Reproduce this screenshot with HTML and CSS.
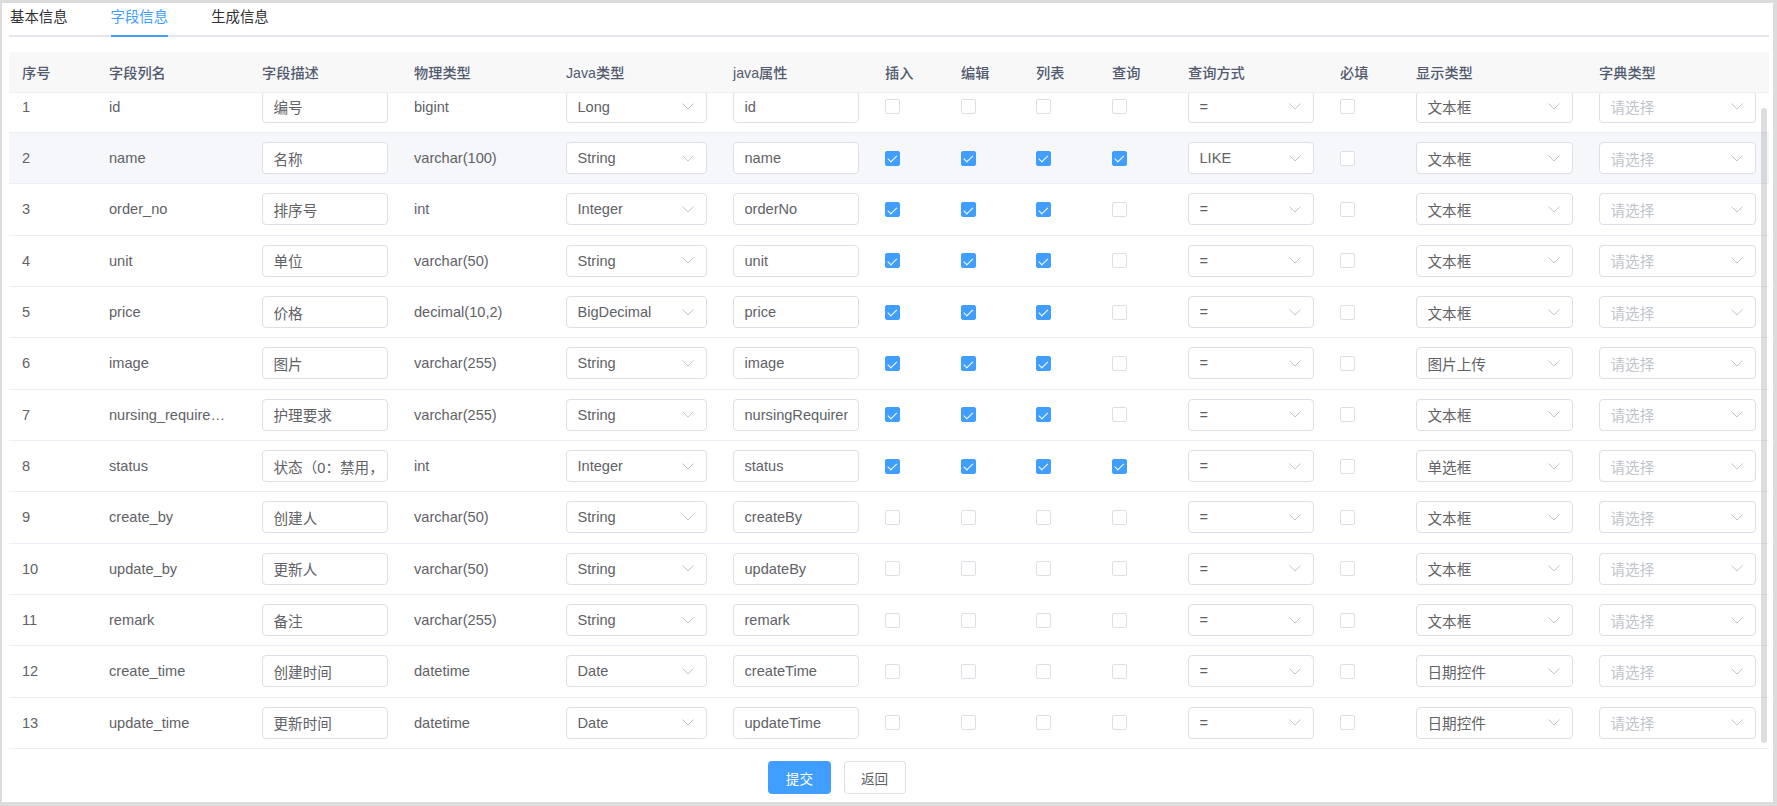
FILE: index.html
```html
<!DOCTYPE html>
<html lang="zh-CN">
<head>
<meta charset="utf-8">
<title>字段信息</title>
<link rel="stylesheet" href="styles.css">
</head>
<body>
<div class="card">
  <div class="tabs">
    <div class="tab"><span>基本信息</span></div>
    <div class="tab active"><span>字段信息</span></div>
    <div class="tab"><span>生成信息</span></div>
  </div>

  <table class="grid head">
    <colgroup>
      <col class="c1"><col class="c2"><col class="c3"><col class="c4"><col class="c5"><col class="c6"><col class="c7"><col class="c8"><col class="c9"><col class="c10"><col class="c11"><col class="c12"><col class="c13"><col class="c14">
    </colgroup>
    <thead>
      <tr>
        <th>序号</th><th>字段列名</th><th>字段描述</th><th>物理类型</th><th>Java类型</th><th>java属性</th><th>插入</th><th>编辑</th><th>列表</th><th>查询</th><th>查询方式</th><th>必填</th><th>显示类型</th><th>字典类型</th>
      </tr>
    </thead>
  </table>

  <div class="body-wrap">
    <table class="grid body">
      <colgroup>
        <col class="c1"><col class="c2"><col class="c3"><col class="c4"><col class="c5"><col class="c6"><col class="c7"><col class="c8"><col class="c9"><col class="c10"><col class="c11"><col class="c12"><col class="c13"><col class="c14">
      </colgroup>
      <tbody>
        <tr>
          <td>1</td><td>id</td><td><input class="inp" value="编号"></td><td>bigint</td>
          <td><div class="sel"><span>Long</span><svg viewBox="0 0 12 7"><path d="M0.5 0.5L6 6L11.5 0.5"/></svg></div></td>
          <td><input class="inp" value="id"></td>
          <td><span class="cb"></span></td><td><span class="cb"></span></td><td><span class="cb"></span></td><td><span class="cb"></span></td>
          <td><div class="sel"><span>=</span><svg viewBox="0 0 12 7"><path d="M0.5 0.5L6 6L11.5 0.5"/></svg></div></td>
          <td><span class="cb"></span></td>
          <td><div class="sel"><span>文本框</span><svg viewBox="0 0 12 7"><path d="M0.5 0.5L6 6L11.5 0.5"/></svg></div></td>
          <td><div class="sel"><span class="ph">请选择</span><svg viewBox="0 0 12 7"><path d="M0.5 0.5L6 6L11.5 0.5"/></svg></div></td>
        </tr>
        <tr class="hover">
          <td>2</td><td>name</td><td><input class="inp" value="名称"></td><td>varchar(100)</td>
          <td><div class="sel"><span>String</span><svg viewBox="0 0 12 7"><path d="M0.5 0.5L6 6L11.5 0.5"/></svg></div></td>
          <td><input class="inp" value="name"></td>
          <td><span class="cb on"></span></td><td><span class="cb on"></span></td><td><span class="cb on"></span></td><td><span class="cb on"></span></td>
          <td><div class="sel"><span>LIKE</span><svg viewBox="0 0 12 7"><path d="M0.5 0.5L6 6L11.5 0.5"/></svg></div></td>
          <td><span class="cb"></span></td>
          <td><div class="sel"><span>文本框</span><svg viewBox="0 0 12 7"><path d="M0.5 0.5L6 6L11.5 0.5"/></svg></div></td>
          <td><div class="sel"><span class="ph">请选择</span><svg viewBox="0 0 12 7"><path d="M0.5 0.5L6 6L11.5 0.5"/></svg></div></td>
        </tr>
        <tr>
          <td>3</td><td>order_no</td><td><input class="inp" value="排序号"></td><td>int</td>
          <td><div class="sel"><span>Integer</span><svg viewBox="0 0 12 7"><path d="M0.5 0.5L6 6L11.5 0.5"/></svg></div></td>
          <td><input class="inp" value="orderNo"></td>
          <td><span class="cb on"></span></td><td><span class="cb on"></span></td><td><span class="cb on"></span></td><td><span class="cb"></span></td>
          <td><div class="sel"><span>=</span><svg viewBox="0 0 12 7"><path d="M0.5 0.5L6 6L11.5 0.5"/></svg></div></td>
          <td><span class="cb"></span></td>
          <td><div class="sel"><span>文本框</span><svg viewBox="0 0 12 7"><path d="M0.5 0.5L6 6L11.5 0.5"/></svg></div></td>
          <td><div class="sel"><span class="ph">请选择</span><svg viewBox="0 0 12 7"><path d="M0.5 0.5L6 6L11.5 0.5"/></svg></div></td>
        </tr>
        <tr>
          <td>4</td><td>unit</td><td><input class="inp" value="单位"></td><td>varchar(50)</td>
          <td><div class="sel"><span>String</span><svg viewBox="0 0 12 7"><path d="M0.5 0.5L6 6L11.5 0.5"/></svg></div></td>
          <td><input class="inp" value="unit"></td>
          <td><span class="cb on"></span></td><td><span class="cb on"></span></td><td><span class="cb on"></span></td><td><span class="cb"></span></td>
          <td><div class="sel"><span>=</span><svg viewBox="0 0 12 7"><path d="M0.5 0.5L6 6L11.5 0.5"/></svg></div></td>
          <td><span class="cb"></span></td>
          <td><div class="sel"><span>文本框</span><svg viewBox="0 0 12 7"><path d="M0.5 0.5L6 6L11.5 0.5"/></svg></div></td>
          <td><div class="sel"><span class="ph">请选择</span><svg viewBox="0 0 12 7"><path d="M0.5 0.5L6 6L11.5 0.5"/></svg></div></td>
        </tr>
        <tr>
          <td>5</td><td>price</td><td><input class="inp" value="价格"></td><td>decimal(10,2)</td>
          <td><div class="sel"><span>BigDecimal</span><svg viewBox="0 0 12 7"><path d="M0.5 0.5L6 6L11.5 0.5"/></svg></div></td>
          <td><input class="inp" value="price"></td>
          <td><span class="cb on"></span></td><td><span class="cb on"></span></td><td><span class="cb on"></span></td><td><span class="cb"></span></td>
          <td><div class="sel"><span>=</span><svg viewBox="0 0 12 7"><path d="M0.5 0.5L6 6L11.5 0.5"/></svg></div></td>
          <td><span class="cb"></span></td>
          <td><div class="sel"><span>文本框</span><svg viewBox="0 0 12 7"><path d="M0.5 0.5L6 6L11.5 0.5"/></svg></div></td>
          <td><div class="sel"><span class="ph">请选择</span><svg viewBox="0 0 12 7"><path d="M0.5 0.5L6 6L11.5 0.5"/></svg></div></td>
        </tr>
        <tr>
          <td>6</td><td>image</td><td><input class="inp" value="图片"></td><td>varchar(255)</td>
          <td><div class="sel"><span>String</span><svg viewBox="0 0 12 7"><path d="M0.5 0.5L6 6L11.5 0.5"/></svg></div></td>
          <td><input class="inp" value="image"></td>
          <td><span class="cb on"></span></td><td><span class="cb on"></span></td><td><span class="cb on"></span></td><td><span class="cb"></span></td>
          <td><div class="sel"><span>=</span><svg viewBox="0 0 12 7"><path d="M0.5 0.5L6 6L11.5 0.5"/></svg></div></td>
          <td><span class="cb"></span></td>
          <td><div class="sel"><span>图片上传</span><svg viewBox="0 0 12 7"><path d="M0.5 0.5L6 6L11.5 0.5"/></svg></div></td>
          <td><div class="sel"><span class="ph">请选择</span><svg viewBox="0 0 12 7"><path d="M0.5 0.5L6 6L11.5 0.5"/></svg></div></td>
        </tr>
        <tr>
          <td>7</td><td>nursing_requirements</td><td><input class="inp" value="护理要求"></td><td>varchar(255)</td>
          <td><div class="sel"><span>String</span><svg viewBox="0 0 12 7"><path d="M0.5 0.5L6 6L11.5 0.5"/></svg></div></td>
          <td><input class="inp" value="nursingRequirements"></td>
          <td><span class="cb on"></span></td><td><span class="cb on"></span></td><td><span class="cb on"></span></td><td><span class="cb"></span></td>
          <td><div class="sel"><span>=</span><svg viewBox="0 0 12 7"><path d="M0.5 0.5L6 6L11.5 0.5"/></svg></div></td>
          <td><span class="cb"></span></td>
          <td><div class="sel"><span>文本框</span><svg viewBox="0 0 12 7"><path d="M0.5 0.5L6 6L11.5 0.5"/></svg></div></td>
          <td><div class="sel"><span class="ph">请选择</span><svg viewBox="0 0 12 7"><path d="M0.5 0.5L6 6L11.5 0.5"/></svg></div></td>
        </tr>
        <tr>
          <td>8</td><td>status</td><td><input class="inp" value="状态（0：禁用，1：启用）"></td><td>int</td>
          <td><div class="sel"><span>Integer</span><svg viewBox="0 0 12 7"><path d="M0.5 0.5L6 6L11.5 0.5"/></svg></div></td>
          <td><input class="inp" value="status"></td>
          <td><span class="cb on"></span></td><td><span class="cb on"></span></td><td><span class="cb on"></span></td><td><span class="cb on"></span></td>
          <td><div class="sel"><span>=</span><svg viewBox="0 0 12 7"><path d="M0.5 0.5L6 6L11.5 0.5"/></svg></div></td>
          <td><span class="cb"></span></td>
          <td><div class="sel"><span>单选框</span><svg viewBox="0 0 12 7"><path d="M0.5 0.5L6 6L11.5 0.5"/></svg></div></td>
          <td><div class="sel"><span class="ph">请选择</span><svg viewBox="0 0 12 7"><path d="M0.5 0.5L6 6L11.5 0.5"/></svg></div></td>
        </tr>
        <tr>
          <td>9</td><td>create_by</td><td><input class="inp" value="创建人"></td><td>varchar(50)</td>
          <td><div class="sel"><span>String</span><svg viewBox="0 0 12 7"><path d="M0.5 0.5L6 6L11.5 0.5"/></svg></div></td>
          <td><input class="inp" value="createBy"></td>
          <td><span class="cb"></span></td><td><span class="cb"></span></td><td><span class="cb"></span></td><td><span class="cb"></span></td>
          <td><div class="sel"><span>=</span><svg viewBox="0 0 12 7"><path d="M0.5 0.5L6 6L11.5 0.5"/></svg></div></td>
          <td><span class="cb"></span></td>
          <td><div class="sel"><span>文本框</span><svg viewBox="0 0 12 7"><path d="M0.5 0.5L6 6L11.5 0.5"/></svg></div></td>
          <td><div class="sel"><span class="ph">请选择</span><svg viewBox="0 0 12 7"><path d="M0.5 0.5L6 6L11.5 0.5"/></svg></div></td>
        </tr>
        <tr>
          <td>10</td><td>update_by</td><td><input class="inp" value="更新人"></td><td>varchar(50)</td>
          <td><div class="sel"><span>String</span><svg viewBox="0 0 12 7"><path d="M0.5 0.5L6 6L11.5 0.5"/></svg></div></td>
          <td><input class="inp" value="updateBy"></td>
          <td><span class="cb"></span></td><td><span class="cb"></span></td><td><span class="cb"></span></td><td><span class="cb"></span></td>
          <td><div class="sel"><span>=</span><svg viewBox="0 0 12 7"><path d="M0.5 0.5L6 6L11.5 0.5"/></svg></div></td>
          <td><span class="cb"></span></td>
          <td><div class="sel"><span>文本框</span><svg viewBox="0 0 12 7"><path d="M0.5 0.5L6 6L11.5 0.5"/></svg></div></td>
          <td><div class="sel"><span class="ph">请选择</span><svg viewBox="0 0 12 7"><path d="M0.5 0.5L6 6L11.5 0.5"/></svg></div></td>
        </tr>
        <tr>
          <td>11</td><td>remark</td><td><input class="inp" value="备注"></td><td>varchar(255)</td>
          <td><div class="sel"><span>String</span><svg viewBox="0 0 12 7"><path d="M0.5 0.5L6 6L11.5 0.5"/></svg></div></td>
          <td><input class="inp" value="remark"></td>
          <td><span class="cb"></span></td><td><span class="cb"></span></td><td><span class="cb"></span></td><td><span class="cb"></span></td>
          <td><div class="sel"><span>=</span><svg viewBox="0 0 12 7"><path d="M0.5 0.5L6 6L11.5 0.5"/></svg></div></td>
          <td><span class="cb"></span></td>
          <td><div class="sel"><span>文本框</span><svg viewBox="0 0 12 7"><path d="M0.5 0.5L6 6L11.5 0.5"/></svg></div></td>
          <td><div class="sel"><span class="ph">请选择</span><svg viewBox="0 0 12 7"><path d="M0.5 0.5L6 6L11.5 0.5"/></svg></div></td>
        </tr>
        <tr>
          <td>12</td><td>create_time</td><td><input class="inp" value="创建时间"></td><td>datetime</td>
          <td><div class="sel"><span>Date</span><svg viewBox="0 0 12 7"><path d="M0.5 0.5L6 6L11.5 0.5"/></svg></div></td>
          <td><input class="inp" value="createTime"></td>
          <td><span class="cb"></span></td><td><span class="cb"></span></td><td><span class="cb"></span></td><td><span class="cb"></span></td>
          <td><div class="sel"><span>=</span><svg viewBox="0 0 12 7"><path d="M0.5 0.5L6 6L11.5 0.5"/></svg></div></td>
          <td><span class="cb"></span></td>
          <td><div class="sel"><span>日期控件</span><svg viewBox="0 0 12 7"><path d="M0.5 0.5L6 6L11.5 0.5"/></svg></div></td>
          <td><div class="sel"><span class="ph">请选择</span><svg viewBox="0 0 12 7"><path d="M0.5 0.5L6 6L11.5 0.5"/></svg></div></td>
        </tr>
        <tr>
          <td>13</td><td>update_time</td><td><input class="inp" value="更新时间"></td><td>datetime</td>
          <td><div class="sel"><span>Date</span><svg viewBox="0 0 12 7"><path d="M0.5 0.5L6 6L11.5 0.5"/></svg></div></td>
          <td><input class="inp" value="updateTime"></td>
          <td><span class="cb"></span></td><td><span class="cb"></span></td><td><span class="cb"></span></td><td><span class="cb"></span></td>
          <td><div class="sel"><span>=</span><svg viewBox="0 0 12 7"><path d="M0.5 0.5L6 6L11.5 0.5"/></svg></div></td>
          <td><span class="cb"></span></td>
          <td><div class="sel"><span>日期控件</span><svg viewBox="0 0 12 7"><path d="M0.5 0.5L6 6L11.5 0.5"/></svg></div></td>
          <td><div class="sel"><span class="ph">请选择</span><svg viewBox="0 0 12 7"><path d="M0.5 0.5L6 6L11.5 0.5"/></svg></div></td>
        </tr>
      </tbody>
    </table>
    <div class="thumb"></div>
  </div>

  <div class="footer">
    <button class="btn primary">提交</button>
    <button class="btn">返回</button>
  </div>
</div>
</body>
</html>
```

FILE: styles.css
```css
* {
  box-sizing: border-box;
}

html,
body {
  margin: 0;
  padding: 0;
}

body {
  width: 1777px;
  height: 806px;
  overflow: hidden;
  background: #dcdcdc;
  font-family: "Liberation Sans", "Noto Sans CJK SC", sans-serif;
  font-size: 14.6px;
  color: #606266;
}

.card {
  margin: 3px 4px 0 2px;
  height: 799px;
  background: #fff;
  padding: 0 4px 8px 7px;
  display: flex;
  flex-direction: column;
}

/* tabs */
.tabs {
  display: flex;
  padding-left: 1px;
  border-bottom: 2px solid #e4e7ed;
  flex: none;
}

.tab {
  padding: 0 21.5px;
  font-size: 14.4px;
  color: #303133;
}

.tab:first-child {
  padding-left: 0;
}

.tab span {
  display: block;
  line-height: 28px;
  padding-bottom: 4px;
}

.tab.active span {
  color: #409eff;
  border-bottom: 2px solid #409eff;
  margin-bottom: -2px;
}

/* table */
.grid {
  width: 1760px;
  table-layout: fixed;
  border-collapse: separate;
  border-spacing: 0;
}

.c1 { width: 87px; }
.c2 { width: 153px; }
.c3 { width: 152px; }
.c4 { width: 152px; }
.c5 { width: 167px; }
.c6 { width: 152px; }
.c7 { width: 76px; }
.c8 { width: 75px; }
.c9 { width: 76px; }
.c10 { width: 76px; }
.c11 { width: 152px; }
.c12 { width: 76px; }
.c13 { width: 183px; }
.c14 { width: 183px; }

.head {
  margin-top: 15px;
  flex: none;
}

.head th {
  height: 41px;
  padding: 0 13px;
  background: #f8f8f9;
  color: #515a6e;
  font-weight: 500;
  font-size: 14.2px;
  text-align: left;
  border-bottom: 1px solid #ebeef5;
  white-space: nowrap;
}

.body-wrap {
  position: relative;
  height: 656px;
  overflow: hidden;
  flex: none;
}

.body {
  margin-top: -11.33px;
}

.body td {
  height: 51.33px;
  padding: 0 13px;
  border-bottom: 1px solid #ebeef5;
  white-space: nowrap;
  overflow: hidden;
  text-overflow: ellipsis;
  vertical-align: middle;
  background: #fff;
}

.body tr.hover td {
  background: #f5f7fa;
}

.inp {
  display: block;
  width: 100%;
  height: 32px;
  margin: 0;
  padding: 0 10.5px;
  border: 1px solid #dcdfe6;
  border-radius: 4px;
  background: #fff;
  font-family: inherit;
  font-size: 14.6px;
  color: #606266;
  outline: none;
}

.sel {
  display: flex;
  align-items: center;
  justify-content: space-between;
  height: 32px;
  padding: 0 12px 0 10.5px;
  border: 1px solid #dcdfe6;
  border-radius: 4px;
  background: #fff;
  color: #606266;
}

.sel span {
  white-space: nowrap;
  overflow: hidden;
}

.sel .ph {
  color: #c0c4cc;
}

.sel svg {
  width: 12px;
  height: 7px;
  flex: none;
  fill: none;
  stroke: #c0c4cc;
  stroke-width: 1;
}

.cb {
  display: block;
  position: relative;
  width: 15px;
  height: 15px;
  border: 1px solid #dcdfe6;
  border-radius: 2px;
  background: #fff;
}

.cb.on {
  background: #409eff;
  border-color: #409eff;
}

.cb.on::after {
  content: "";
  position: absolute;
  left: 4.3px;
  top: 1.6px;
  width: 3.6px;
  height: 7.6px;
  border: solid #fff;
  border-width: 0 1.2px 1.2px 0;
  transform: rotate(45deg);
}

.thumb {
  position: absolute;
  right: 2px;
  top: 15px;
  bottom: 6px;
  width: 6px;
  border-radius: 3px;
  background: rgba(144, 147, 153, 0.3);
}

/* footer buttons */
.footer {
  margin-top: 12px;
  display: flex;
  justify-content: center;
  gap: 13px;
  padding-right: 104px;
  flex: none;
}

.btn {
  height: 33px;
  padding: 0 16.5px;
  border: 1px solid #dcdfe6;
  border-radius: 3.5px;
  background: #fff;
  color: #606266;
  font-family: inherit;
  font-size: 13.6px;
  cursor: pointer;
}

.btn.primary {
  background: #409eff;
  border-color: #409eff;
  color: #fff;
}
```
